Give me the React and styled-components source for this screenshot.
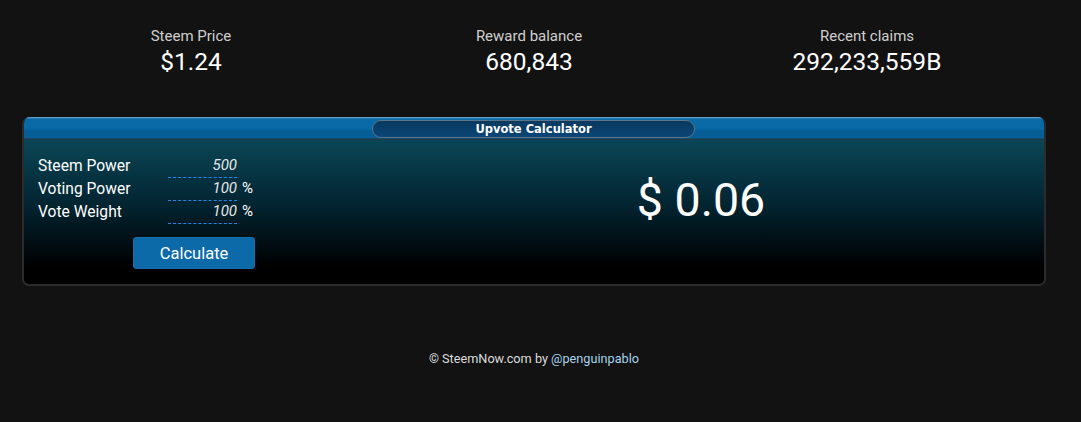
import React from "react";
import styled, { createGlobalStyle } from "styled-components";

const GlobalStyle = createGlobalStyle`
  html, body {
    margin: 0;
    padding: 0;
    background: #121212;
    font-family: Roboto, "Liberation Sans", sans-serif;
    color: #fff;
  }
`;

const Page = styled.div`
  width: 1081px;
  height: 422px;
  padding: 26px 35px 0 22px;
  box-sizing: border-box;
`;

const Stats = styled.div`
  display: grid;
  grid-template-columns: repeat(3, 338px);
  height: 91px;
`;

const Stat = styled.div`
  display: flex;
  flex-direction: column;
  align-items: center;
`;

const StatLabel = styled.div`
  font-size: 15px;
  line-height: 20px;
  color: #cfcfcf;
`;

const StatValue = styled.div`
  font-size: 24.5px;
  line-height: 30px;
  margin-top: 1px;
  color: #fff;
`;

const Panel = styled.div`
  width: 1024px;
  height: 169px;
  box-sizing: border-box;
  border: 2px solid #2b2b2b;
  border-top: none;
  border-radius: 7px;
  overflow: hidden;
  display: flex;
  flex-direction: column;
`;

const Header = styled.div`
  height: 23px;
  flex-shrink: 0;
  display: flex;
  justify-content: center;
  align-items: center;
  background: linear-gradient(
    to bottom,
    #8fb6cc 0px,
    #3a86b8 1px,
    #0a6aa8 2px,
    #0769a6 12px,
    #075d96 13px,
    #075d96 21px,
    #1d3a48 22px
  );
`;

const TitlePill = styled.div`
  width: 323px;
  height: 18px;
  margin: 1px 0 0 -1px;
  box-sizing: border-box;
  border: 1px solid #5d7488;
  border-radius: 9px;
  background: linear-gradient(to bottom, #08395f, #0b4677);
  display: flex;
  justify-content: center;
  align-items: center;
  font-family: "DejaVu Sans", sans-serif;
  font-weight: bold;
  font-size: 11.5px;
  color: #fff;
`;

const Body = styled.div`
  flex: 1;
  display: flex;
  background: linear-gradient(to bottom, #0a4656 0%, #032431 45%, #000 88%, #000 100%);
`;

const Form = styled.div`
  width: 240px;
  padding: 15px 0 0 14px;
`;

const Row = styled.div`
  display: flex;
  align-items: flex-end;
  height: 23px;
`;

const Label = styled.div`
  width: 130px;
  font-size: 15.6px;
  line-height: 19px;
  padding-bottom: 2px;
`;

const Field = styled.div`
  width: 69px;
  text-align: right;
  font-style: italic;
  font-size: 15px;
  line-height: 17px;
  color: #e8e8e8;
  border-bottom: 1px dashed #1e88ea;
  padding-bottom: 3px;
  box-sizing: border-box;
`;

const Unit = styled.span`
  font-size: 15px;
  margin-left: 5px;
  padding-bottom: 4px;
  line-height: 17px;
`;

const Button = styled.button`
  margin: 13px 0 0 95px;
  width: 122px;
  height: 32px;
  border: 1px solid #1570ab;
  border-radius: 3px;
  background: #0b6aa7;
  color: #fff;
  font-family: Roboto, "Liberation Sans", sans-serif;
  font-size: 16.5px;
  padding: 0;
`;

const Result = styled.div`
  flex: 1;
  display: flex;
  justify-content: center;
  padding: 33px 0 0 80px;
  font-size: 46.5px;
  line-height: 54px;
  color: #fff;
`;

const Footer = styled.div`
  margin-top: 65px;
  width: 1024px;
  text-align: center;
  font-size: 12.7px;
  color: #dcdcdc;

  & > a {
    color: #a5d3ee;
    text-decoration: none;
  }
`;

const stats = [
  { label: "Steem Price", value: "$1.24" },
  { label: "Reward balance", value: "680,843" },
  { label: "Recent claims", value: "292,233,559B" },
];

const fields = [
  { label: "Steem Power", value: "500" },
  { label: "Voting Power", value: "100", unit: "%" },
  { label: "Vote Weight", value: "100", unit: "%" },
];

const App = () => {
  return (
    <Page>
      <GlobalStyle />
      <Stats>
        {stats.map((s) => (
          <Stat key={s.label}>
            <StatLabel>{s.label}</StatLabel>
            <StatValue>{s.value}</StatValue>
          </Stat>
        ))}
      </Stats>
      <Panel>
        <Header>
          <TitlePill>Upvote Calculator</TitlePill>
        </Header>
        <Body>
          <Form>
            {fields.map((f) => (
              <Row key={f.label}>
                <Label>{f.label}</Label>
                <Field>{f.value}</Field>
                {f.unit && <Unit>{f.unit}</Unit>}
              </Row>
            ))}
            <Button>Calculate</Button>
          </Form>
          <Result>$ 0.06</Result>
        </Body>
      </Panel>
      <Footer>
        © SteemNow.com by <a href="#">@penguinpablo</a>
      </Footer>
    </Page>
  );
};

export default App;
